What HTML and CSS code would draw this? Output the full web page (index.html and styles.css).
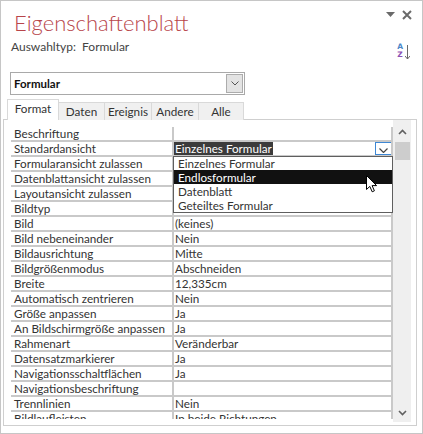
FILE: index.html
```html
<!DOCTYPE html>
<html lang="de">
<head>
<meta charset="utf-8">
<title>Eigenschaftenblatt</title>
<link rel="stylesheet" href="styles.css">
</head>
<body>
<div class="window">
  <div class="title-row">
    <h1 class="title">Eigenschaftenblatt</h1>
    <div class="ctrls">
      <svg class="ic-menu" width="9" height="5" viewBox="0 0 9 5"><polygon points="0,0 9,0 4.5,5" fill="#6a6a6a"/></svg>
      <svg class="ic-close" width="10" height="10" viewBox="0 0 10 10"><path d="M1 1 L9 9 M9 1 L1 9" stroke="#6a6a6a" stroke-width="2" fill="none"/></svg>
    </div>
  </div>
  <div class="sub-row">
    <span class="sel-type">Auswahltyp:&nbsp; Formular</span>
    <span class="sort">
      <span class="sort-letters"><span class="sa">A</span><span class="sz">Z</span></span>
      <svg class="sort-arrow" width="5" height="15" viewBox="0 0 5 15"><path d="M2.5 0 V14 M0 11 L2.5 14 L5 11" stroke="#6a6a6a" stroke-width="1" fill="none"/></svg>
    </span>
  </div>
  <div class="combo">
    <span class="combo-text">Formular</span>
    <span class="combo-btn"><svg width="8" height="5" viewBox="0 0 8 5"><path d="M0.5 0.5 L4 4 L7.5 0.5" stroke="#555" stroke-width="1" fill="none"/></svg></span>
  </div>
  <div class="tabs">
    <div class="tab active t1">Format</div>
    <div class="tab t2">Daten</div>
    <div class="tab t3">Ereignis</div>
    <div class="tab t3">Andere</div>
    <div class="tab t4">Alle</div>
  </div>
  <div class="pane">
    <div class="grid-wrap">
      <div class="grid">
        <div class="row"><div class="lbl">Beschriftung</div><div class="val"></div></div>
        <div class="row"><div class="lbl">Standardansicht</div><div class="val active"><span class="sel">Einzelnes Formular</span><span class="cell-btn"><svg width="9" height="5" viewBox="0 0 9 5"><path d="M0.5 0.5 L4.5 4.5 L8.5 0.5" stroke="#444" stroke-width="1.2" fill="none"/></svg></span></div></div>
        <div class="row"><div class="lbl">Formularansicht zulassen</div><div class="val"></div></div>
        <div class="row"><div class="lbl">Datenblattansicht zulassen</div><div class="val"></div></div>
        <div class="row"><div class="lbl">Layoutansicht zulassen</div><div class="val"></div></div>
        <div class="row"><div class="lbl">Bildtyp</div><div class="val"></div></div>
        <div class="row"><div class="lbl">Bild</div><div class="val">(keines)</div></div>
        <div class="row"><div class="lbl">Bild nebeneinander</div><div class="val">Nein</div></div>
        <div class="row"><div class="lbl">Bildausrichtung</div><div class="val">Mitte</div></div>
        <div class="row"><div class="lbl">Bildgrößenmodus</div><div class="val">Abschneiden</div></div>
        <div class="row"><div class="lbl">Breite</div><div class="val">12,335cm</div></div>
        <div class="row"><div class="lbl">Automatisch zentrieren</div><div class="val">Nein</div></div>
        <div class="row"><div class="lbl">Größe anpassen</div><div class="val">Ja</div></div>
        <div class="row"><div class="lbl">An Bildschirmgröße anpassen</div><div class="val">Ja</div></div>
        <div class="row"><div class="lbl">Rahmenart</div><div class="val">Veränderbar</div></div>
        <div class="row"><div class="lbl">Datensatzmarkierer</div><div class="val">Ja</div></div>
        <div class="row"><div class="lbl">Navigationsschaltflächen</div><div class="val">Ja</div></div>
        <div class="row"><div class="lbl">Navigationsbeschriftung</div><div class="val"></div></div>
        <div class="row"><div class="lbl">Trennlinien</div><div class="val">Nein</div></div>
        <div class="row"><div class="lbl">Bildlaufleisten</div><div class="val">In beide Richtungen</div></div>
      </div>
      <div class="list">
        <div class="item first">Einzelnes Formular</div>
        <div class="item hl">Endlosformular</div>
        <div class="item">Datenblatt</div>
        <div class="item">Geteiltes Formular</div>
      </div>
      <svg class="cursor" width="13" height="18" viewBox="0 0 13 18"><path d="M0.5 0.5 L0.5 14.5 L3.8 11.4 L6.2 16.8 L8.4 15.8 L6.1 10.6 L10.6 10.6 Z" fill="#fff" stroke="#000" stroke-width="1" stroke-linejoin="round"/></svg>
    </div>
    <div class="scrollbar">
      <div class="sb-btn up"><svg width="9" height="6" viewBox="0 0 9 6"><path d="M1 5 L4.5 1.5 L8 5" stroke="#606060" stroke-width="1.6" fill="none"/></svg></div>
      <div class="sb-thumb"></div>
      <div class="sb-track"></div>
      <div class="sb-btn down"><svg width="9" height="6" viewBox="0 0 9 6"><path d="M1 1 L4.5 4.5 L8 1" stroke="#606060" stroke-width="1.6" fill="none"/></svg></div>
    </div>
  </div>
</div>
</body>
</html>
```
FILE: styles.css
```css
* { box-sizing: border-box; }
html, body { margin: 0; padding: 0; background: #fff; }
body {
  font-family: Lato, "Liberation Sans", sans-serif;
  font-size: 11.7px;
  color: #333;
}
.window {
  width: 423px;
  height: 434px;
  border: 1px solid #c6c6c6;
  position: relative;
  overflow: hidden;
  display: flex;
  flex-direction: column;
}
.title-row {
  display: flex;
  justify-content: space-between;
  align-items: flex-start;
  padding: 9px 10px 0 13px;
  height: 36px;
  flex: none;
}
.title {
  margin: 0;
  font-weight: 300;
  font-size: 22px;
  line-height: 26px;
  color: #b8454a;
}
.ctrls {
  display: flex;
  align-items: flex-start;
  gap: 7px;
}
.ic-menu { margin-top: 2px; }
.sub-row {
  display: flex;
  justify-content: space-between;
  align-items: flex-start;
  padding: 2px 12px 0 10px;
  height: 24px;
  flex: none;
}
.sel-type {
  font-size: 12px;
  line-height: 15px;
  color: #444;
}
.sort {
  display: flex;
  align-items: flex-start;
  gap: 2px;
  margin-top: 4px;
}
.sort-letters {
  display: flex;
  flex-direction: column;
  align-items: center;
  font-family: "DejaVu Sans", sans-serif;
  font-weight: bold;
  font-size: 7.5px;
  line-height: 8px;
}
.sa { color: #4a86c8; }
.sz { color: #8a4fb4; }
.sort-arrow { margin-top: 2px; }
.combo {
  margin: 11px 0 0 9px;
  width: 235px;
  height: 23px;
  flex: none;
  border: 1px solid #a9a9a9;
  display: flex;
  justify-content: space-between;
  align-items: center;
  padding: 0 1px 0 3px;
}
.combo-text {
  font-weight: 700;
  font-size: 11.5px;
  color: #111;
}
.combo-btn {
  width: 17px;
  height: 19px;
  background: #e3e3e3;
  border: 1px solid #acacac;
  display: flex;
  align-items: center;
  justify-content: center;
}
.tabs {
  display: flex;
  align-items: flex-end;
  margin: 4px 0 -1px 6px;
  height: 21px;
  flex: none;
  position: relative;
  z-index: 1;
}
.tab {
  height: 18px;
  border: 1px solid #d9d9d9;
  border-bottom: none;
  background: #f0f0f0;
  text-align: center;
  font-size: 11.7px;
  line-height: 16px;
  color: #333;
  margin-left: -1px;
}
.tab.active {
  height: 21px;
  background: #fff;
  margin-left: 0;
  line-height: 17px;
}
.t1 { width: 52px; }
.t2 { width: 47px; }
.t3 { width: 48px; }
.t4 { width: 46px; }
.pane {
  margin: 0 5px 0 2px;
  height: 307px;
  flex: none;
  border: 1px solid #cfcfcf;
  display: flex;
  align-items: stretch;
}
.grid-wrap {
  position: relative;
  margin: 7px 0 0 7px;
  width: 382px;
  height: 292px;
  overflow: hidden;
}
.row {
  display: flex;
  height: 15px;
  border-bottom: 2px solid #c9c9c9;
  line-height: 13px;
}
.lbl {
  width: 163px;
  border-right: 2px solid #c9c9c9;
  padding-left: 3px;
  white-space: nowrap;
  overflow: hidden;
}
.val {
  flex: 1;
  border-right: 2px solid #c9c9c9;
  padding-left: 1px;
  white-space: nowrap;
  overflow: hidden;
}
.val.active {
  display: flex;
  justify-content: space-between;
  align-items: flex-start;
  padding-left: 0;
}
.sel {
  background: #3b3b3b;
  color: #fff;
  padding: 0 1px;
}
.cell-btn {
  width: 17px;
  height: 13px;
  border: 1px solid #3d87d4;
  background: #fff;
  display: flex;
  align-items: flex-end;
  justify-content: center;
  padding-bottom: 1px;
  margin-right: -1px;
}
.list {
  position: absolute;
  left: 162px;
  top: 29px;
  width: 220px;
  border: 1px solid #5f5f5f;
  background: #fff;
}
.item {
  height: 14px;
  line-height: 14px;
  padding-left: 4px;
  color: #333;
}
.item.first { height: 13px; line-height: 13px; }
.item.hl { background: #111; color: #fff; }
.cursor {
  position: absolute;
  left: 355px;
  top: 48px;
}
.scrollbar {
  width: 18px;
  margin-bottom: 3px;
  background: #efefef;
  display: flex;
  flex-direction: column;
}
.sb-btn {
  display: flex;
  justify-content: center;
  align-items: center;
  flex: none;
}
.sb-btn.up { height: 22px; padding-top: 2px; }
.sb-thumb {
  height: 18px;
  flex: none;
  margin: 0 1px 0 2px;
  background: #cdcdcd;
}
.sb-track { flex: 1; }
.sb-btn.down { height: 18px; }
```
